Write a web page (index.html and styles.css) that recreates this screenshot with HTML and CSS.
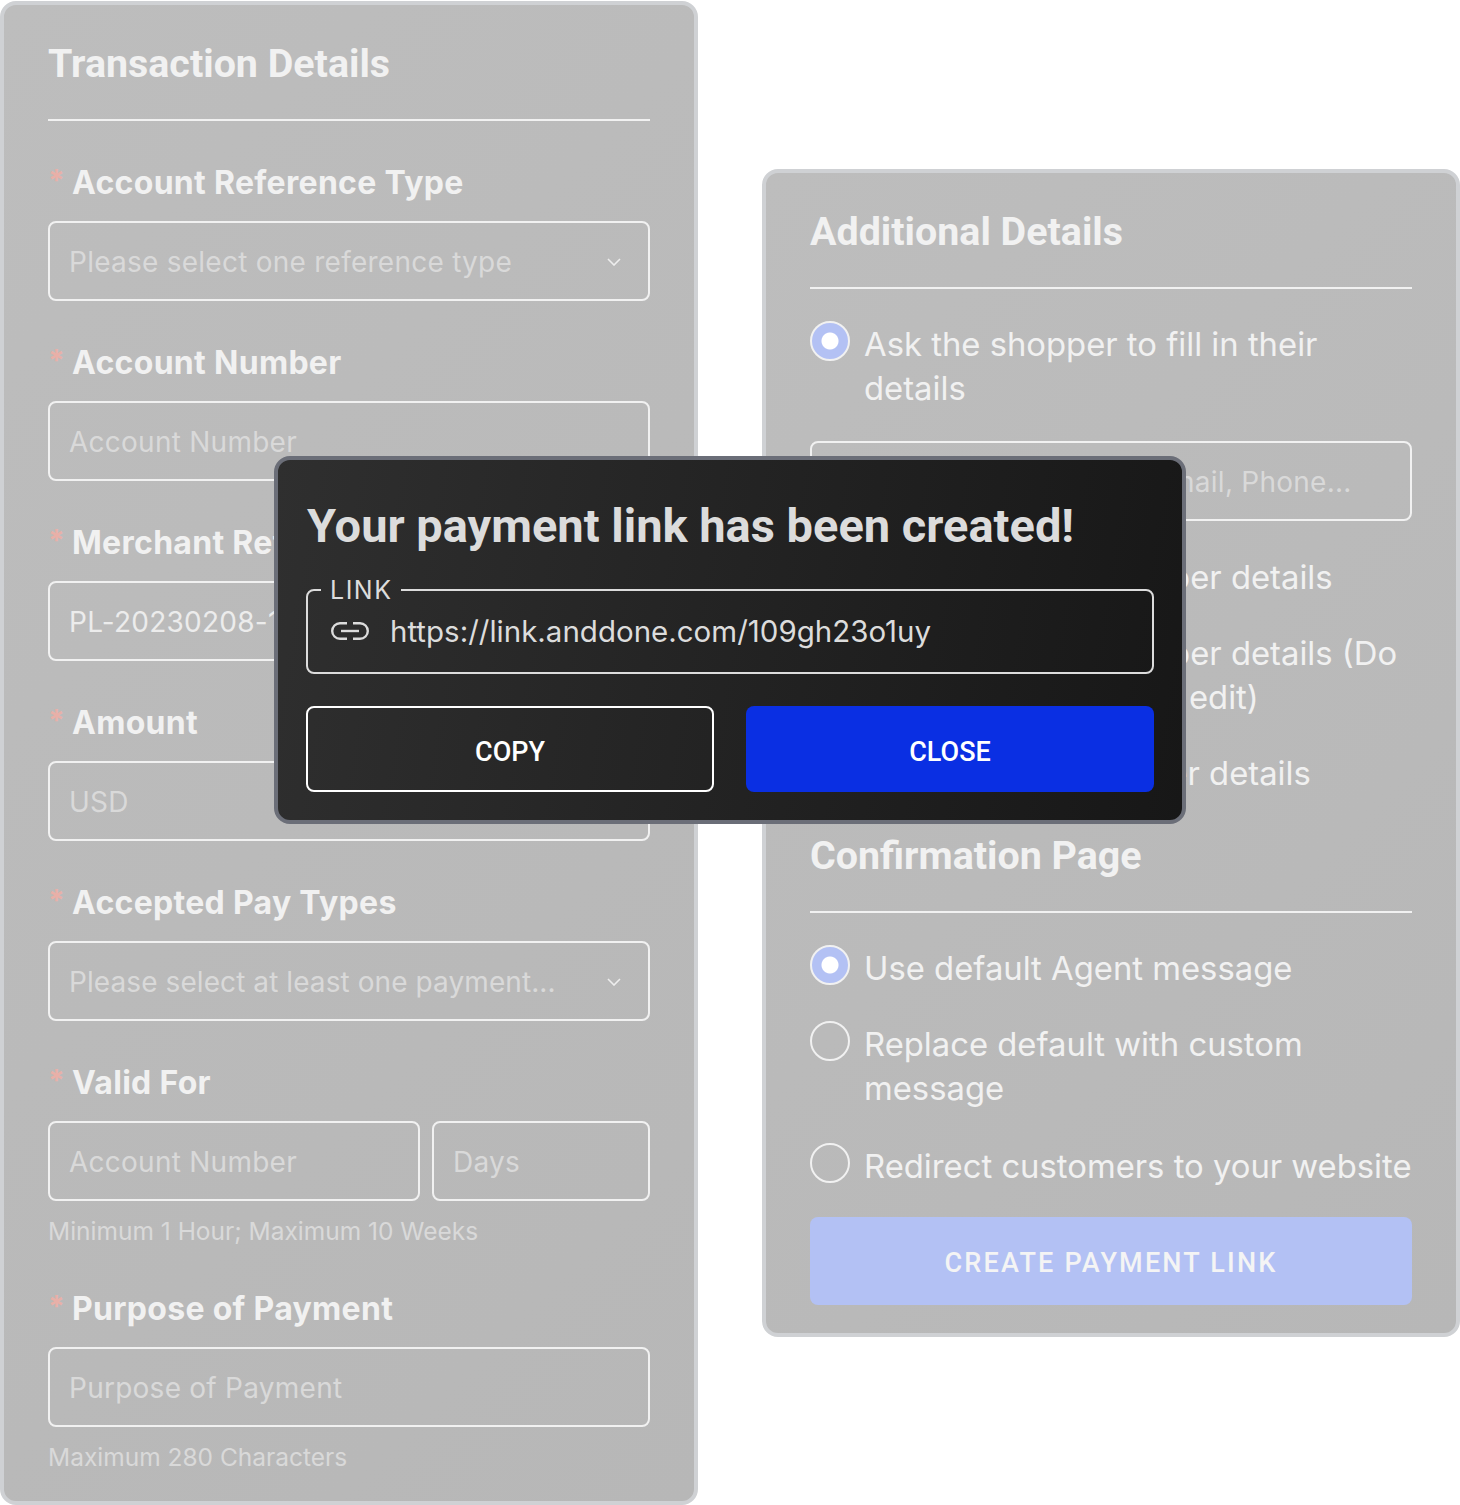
FILE: index.html
```html
<!DOCTYPE html>
<html lang="en">
<head>
  <meta charset="UTF-8">
  <title>Payment Link</title>
  <link rel="stylesheet" href="styles.css">
</head>
<body>
  <div class="stage">
    <section class="card card-left">
      <h2 class="card-title">Transaction Details</h2>

      <label class="field-label"><span class="req">*</span>Account Reference Type</label>
      <div class="input select">
        <span>Please select one reference type</span>
        <svg class="chevron" viewBox="0 0 14 8"><path d="M1 1l6 6 6-6"/></svg>
      </div>

      <label class="field-label"><span class="req">*</span>Account Number</label>
      <div class="input">Account Number</div>

      <label class="field-label"><span class="req">*</span>Merchant Reference</label>
      <div class="input input-value">PL-20230208-12345</div>

      <label class="field-label"><span class="req">*</span>Amount</label>
      <div class="input">USD</div>

      <label class="field-label"><span class="req">*</span>Accepted Pay Types</label>
      <div class="input select">
        <span class="tight">Please select at least one payment...</span>
        <svg class="chevron" viewBox="0 0 14 8"><path d="M1 1l6 6 6-6"/></svg>
      </div>

      <label class="field-label"><span class="req">*</span>Valid For</label>
      <div class="input-row">
        <div class="input input-grow">Account Number</div>
        <div class="input input-days">Days</div>
      </div>
      <p class="hint">Minimum 1 Hour; Maximum 10 Weeks</p>

      <label class="field-label"><span class="req">*</span>Purpose of Payment</label>
      <div class="input">Purpose of Payment</div>
      <p class="hint">Maximum 280 Characters</p>
    </section>

    <section class="card card-right">
      <h2 class="card-title">Additional Details</h2>

      <div class="radio-row">
        <span class="radio checked"></span>
        <span class="radio-text">Ask the shopper to fill in their details</span>
      </div>
      <div class="input input-extra">First Name, Last Name, Email, Phone...</div>
      <div class="radio-row">
        <span class="radio"></span>
        <span class="radio-text">Prefill with the shopper details</span>
      </div>
      <div class="radio-row">
        <span class="radio"></span>
        <span class="radio-text">Prefill with the shopper details (Do not allow shopper to edit)</span>
      </div>
      <div class="radio-row">
        <span class="radio"></span>
        <span class="radio-text">Don't ask for shopper details</span>
      </div>

      <h2 class="card-title title-second">Confirmation Page</h2>

      <div class="radio-row">
        <span class="radio checked"></span>
        <span class="radio-text">Use default Agent message</span>
      </div>
      <div class="radio-row">
        <span class="radio"></span>
        <span class="radio-text">Replace default with custom message</span>
      </div>
      <div class="radio-row radio-row-last">
        <span class="radio"></span>
        <span class="radio-text">Redirect customers to your website</span>
      </div>

      <button class="create-btn">CREATE PAYMENT LINK</button>
    </section>

    <div class="dialog">
      <h1 class="dialog-title">Your payment link has been created!</h1>
      <fieldset class="link-box">
        <legend>LINK</legend>
        <div class="link-row">
          <svg class="link-icon" viewBox="0 0 38 18">
            <path d="M16 1.2H9a7.8 7.8 0 0 0 0 15.6h7"/>
            <path d="M22 1.2h7a7.8 7.8 0 0 1 0 15.6h-7"/>
            <path d="M10 9h18"/>
          </svg>
          <span>https://link.anddone.com/109gh23o1uy</span>
        </div>
      </fieldset>
      <div class="dialog-actions">
        <button class="btn btn-outline">COPY</button>
        <button class="btn btn-primary">CLOSE</button>
      </div>
    </div>
  </div>
</body>
</html>
```

FILE: styles.css
```css
* {
  box-sizing: border-box;
}
body {
  margin: 0;
  background: #fff;
  font-family: 'Inter', sans-serif;
}
.stage {
  position: relative;
  display: flex;
  gap: 64px;
  align-items: flex-start;
  width: 1460px;
  height: 1505px;
  overflow: hidden;
}
.card {
  width: 698px;
  padding: 37px 44px 0;
  border: 4px solid #cfd1d4;
  border-radius: 16px;
  background: linear-gradient(135deg, #bdbdbd, #b7b7b7);
}
.card-left {
  height: 1504px;
  margin-top: 1px;
}
.card-right {
  height: 1168px;
  margin-top: 169px;
}
.card-title {
  margin: 0;
  padding-bottom: 33px;
  border-bottom: 2px solid #f1f1f1;
  font-family: 'Roboto', sans-serif;
  font-size: 39.4px;
  font-weight: 700;
  line-height: 44px;
  color: #f1f1f1;
}
.title-second {
  margin-top: 40px;
}
.field-label {
  display: block;
  margin-top: 42px;
  margin-bottom: 18px;
  font-size: 32px;
  font-weight: 700;
  line-height: 40px;
  letter-spacing: 0.3px;
  color: #f1f1f1;
}
.req {
  display: inline-block;
  width: 24px;
  color: #e8b0a8;
  font-weight: 700;
  vertical-align: 3px;
  font-size: 30px;
  line-height: 20px;
}
.input {
  display: flex;
  align-items: center;
  justify-content: space-between;
  height: 80px;
  padding: 1px 19px 0;
  border: 2px solid #f1f1f1;
  border-radius: 8px;
  font-size: 28px;
  letter-spacing: 0.25px;
  color: #d9d9d9;
  white-space: nowrap;
  overflow: hidden;
}
.input-value {
  color: #ececec;
}
.tight {
  letter-spacing: 0.08px;
}
.chevron {
  flex: none;
  width: 14px;
  height: 8px;
  margin-right: 8px;
  fill: none;
  stroke: #eee;
  stroke-width: 1.6;
}
.input-row {
  display: flex;
  gap: 12px;
}
.input-grow {
  flex: 1;
}
.input-days {
  width: 218px;
}
.hint {
  margin: 14px 0 0;
  font-size: 24.5px;
  line-height: 32px;
  color: #d9d9d9;
}
.radio-row {
  display: flex;
  gap: 14px;
  margin-top: 32px;
}
.radio-row-last {
  margin-top: 34px;
}
.radio {
  flex: none;
  width: 40px;
  height: 40px;
  border: 2px solid #f1f1f1;
  border-radius: 50%;
}
.radio.checked {
  background: radial-gradient(circle, #fff 0, #fff 8px, #b3c1f4 9px);
}
.radio-text {
  margin: 1px 0 -1px;
  font-size: 32.8px;
  font-weight: 400;
  line-height: 44px;
  color: #f1f1f1;
}
.input-extra {
  margin-top: 32px;
}
.input-extra + .radio-row {
  margin-top: 33px;
}
.create-btn {
  display: block;
  width: 100%;
  height: 88px;
  margin-top: 30px;
  padding: 4px 0 0;
  border: none;
  border-radius: 8px;
  background: #b3c1f4;
  font-family: 'Roboto', sans-serif;
  font-size: 27px;
  font-weight: 500;
  letter-spacing: 2.2px;
  color: #f4f4f4;
}
.dialog {
  position: absolute;
  left: 274px;
  top: 456px;
  width: 912px;
  height: 368px;
  padding: 28px;
  border: 4px solid #6b6e78;
  border-radius: 16px;
  background: linear-gradient(100deg, #2f2f2f, #171717);
}
.dialog-title {
  margin: 0;
  padding-left: 1px;
  font-family: 'Roboto', sans-serif;
  font-size: 47px;
  font-weight: 700;
  line-height: 76px;
  color: #dcdcdc;
}
.link-box {
  height: 96px;
  margin: 14px 0 0;
  padding: 0 23px;
  border: 2px solid #dcdcdc;
  border-radius: 8px;
}
.link-box legend {
  margin-left: -10px;
  padding: 0 9px;
  font-size: 25px;
  line-height: 24px;
  letter-spacing: 1.5px;
  color: #dcdcdc;
}
.link-row {
  display: flex;
  align-items: center;
  gap: 21px;
  margin-top: 7px;
  font-size: 29.5px;
  line-height: 44px;
  color: #dcdcdc;
}
.link-icon {
  flex: none;
  width: 38px;
  height: 18px;
  fill: none;
  stroke: #dcdcdc;
  stroke-width: 2.4;
}
.dialog-actions {
  display: grid;
  grid-template-columns: 1fr 1fr;
  gap: 32px;
  margin-top: 32px;
}
.btn {
  height: 86px;
  padding: 6px 0 0;
  border-radius: 8px;
  font-family: 'Roboto', sans-serif;
  font-size: 27px;
  font-weight: 500;
  color: #fff;
}
.btn-outline {
  border: 2px solid #fff;
  background: transparent;
}
.btn-primary {
  border: none;
  background: #0a2fe3;
}
```
